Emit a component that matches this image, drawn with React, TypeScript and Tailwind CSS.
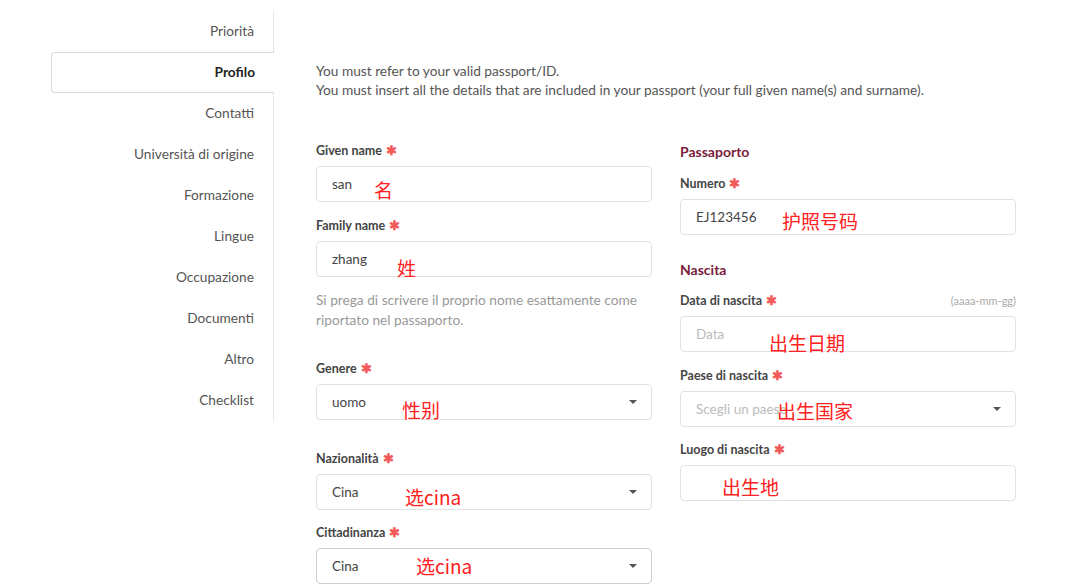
import React from "react";

const menu = [
    "Priorità",
    "Profilo",
    "Contatti",
    "Università di origine",
    "Formazione",
    "Lingue",
    "Occupazione",
    "Documenti",
    "Altro",
    "Checklist",
];

function Star() {
    return <span className="ml-[4px] text-[#f35b5b]">✱</span>;
}

function Label({ text, className = "", right }: { text: string; className?: string; right?: string }) {
    return (
        <div className={`flex items-center justify-between h-[20px] mb-[5px] ${className}`}>
            <span className="text-[12.5px] font-bold text-[#444]">
                {text}
                <Star />
            </span>
            {right && <span className="text-[11px] text-[#aaa]">{right}</span>}
        </div>
    );
}

function Note({ text, left, top }: { text: string; left: number; top: number }) {
    return (
        <span
            className="absolute leading-[20px] text-[19px] text-[#ff2020] whitespace-nowrap"
            style={{ left, top: top - 10, fontFamily: '"Noto Sans CJK SC", sans-serif' }}
        >
            {text}
        </span>
    );
}

function Field({
    value,
    placeholder,
    select,
    note,
    dark,
}: {
    value?: string;
    placeholder?: string;
    select?: boolean;
    note?: { text: string; left: number; top: number };
    dark?: boolean;
}) {
    return (
        <div
            className={`relative h-[36px] rounded-[4px] border bg-white flex items-center pl-[15px] pr-[14px] ${
                dark ? "border-[#cfcfcf]" : "border-[#e2e2e2]"
            }`}
        >
            <span className={`text-[13.5px] ${value ? "text-[#444]" : "text-[#bbb]"}`}>{value || placeholder}</span>
            {select && (
                <svg className="ml-auto" width="8" height="4" viewBox="0 0 8 4">
                    <path d="M0 0h8L4 4z" fill="#555" />
                </svg>
            )}
            {note && <Note {...note} />}
        </div>
    );
}

export default function App() {
    return (
        <div className="w-[1080px] h-[586px] bg-white overflow-hidden flex" style={{ fontFamily: "Lato, 'Open Sans', sans-serif" }}>
            <nav className="ml-[51px] mt-[11px] w-[223px] self-start border-r border-[#e4e4e4]">
                {menu.map((item) =>
                    item === "Profilo" ? (
                        <div
                            key={item}
                            className="h-[41px] -mr-px flex items-center justify-end pr-[19px] border border-r-0 border-[#dcdcdc] rounded-l-[4px] bg-white text-[13.7px] font-bold text-[#222]"
                        >
                            {item}
                        </div>
                    ) : (
                        <div key={item} className="h-[41px] flex items-center justify-end pr-[19px] text-[13.7px] text-[#555]">
                            {item}
                        </div>
                    )
                )}
            </nav>

            <main className="ml-[42px] mt-[61px] w-[700px]">
                <div className="text-[13.7px] leading-[19px] text-[#555]">
                    <p>You must refer to your valid passport/ID.</p>
                    <p>You must insert all the details that are included in your passport (your full given name(s) and surname).</p>
                </div>

                <div className="mt-[42px] grid grid-cols-[336px_336px] gap-x-[28px]">
                    <div>
                        <Label text="Given name" />
                        <Field value="san" note={{ text: "名", left: 57, top: 23 }} />
                        <Label text="Family name" className="mt-[14px]" />
                        <Field value="zhang" note={{ text: "姓", left: 80, top: 26 }} />
                        <p className="mt-[13px] text-[13.7px] leading-[20px] text-[#999]">
                            Si prega di scrivere il proprio nome esattamente come riportato nel passaporto.
                        </p>
                        <Label text="Genere" className="mt-[29px]" />
                        <Field value="uomo" select note={{ text: "性别", left: 85, top: 25 }} />
                        <Label text="Nazionalità" className="mt-[29px]" />
                        <Field value="Cina" select note={{ text: "选cina", left: 88, top: 22 }} />
                        <Label text="Cittadinanza" className="mt-[13px]" />
                        <Field value="Cina" select dark note={{ text: "选cina", left: 99, top: 17 }} />
                    </div>

                    <div>
                        <h3 className="h-[20px] flex items-center text-[14px] font-bold text-[#7b1c3c]">Passaporto</h3>
                        <Label text="Numero" className="mt-[13px]" />
                        <Field value="EJ123456" note={{ text: "护照号码", left: 101, top: 21 }} />
                        <h3 className="mt-[24px] h-[20px] flex items-center text-[14px] font-bold text-[#7b1c3c]">Nascita</h3>
                        <Label text="Data di nascita" className="mt-[12px]" right="(aaaa-mm-gg)" />
                        <Field placeholder="Data" note={{ text: "出生日期", left: 88, top: 26 }} />
                        <Label text="Paese di nascita" className="mt-[14px]" />
                        <Field placeholder="Scegli un paese" select note={{ text: "出生国家", left: 96, top: 19 }} />
                        <Label text="Luogo di nascita" className="mt-[13px]" />
                        <Field note={{ text: "出生地", left: 41, top: 21 }} />
                    </div>
                </div>
            </main>
        </div>
    );
}
